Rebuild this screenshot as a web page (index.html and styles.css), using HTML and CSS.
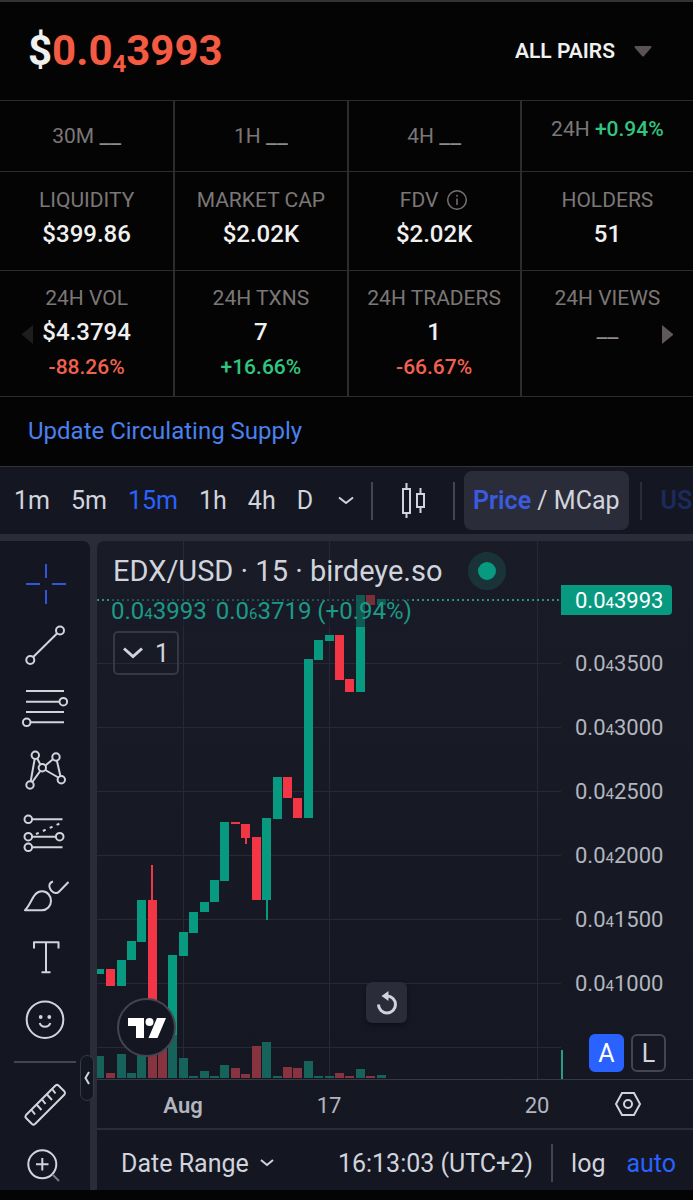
FILE: index.html
```html
<!DOCTYPE html>
<html lang="en">
<head>
  <meta charset="UTF-8">
  <meta name="viewport" content="width=device-width, initial-scale=1.0">
  <title>EDX/USD</title>
  <link rel="stylesheet" href="styles.css">
</head>
<body>
  <header class="header">
    <div class="price">$<span class="price-value">0.0<sub>4</sub>3993</span></div>
    <div class="pairs">
      <select class="pairs-select" aria-label="Pairs">
        <option>ALL PAIRS</option>
      </select>
      <svg class="pairs-caret" width="18" height="11" viewBox="0 0 18 11"><path d="M1 0h16q1 1 0 2l-7 8q-1 1-2 0L1 2q-1-1 0-2z" fill="#5b5353"/></svg>
    </div>
  </header>

  <section class="stats">
    <div class="stats-row changes">
      <div class="stat"><span class="stat-label">30M</span> <span class="stat-empty">__</span></div>
      <div class="stat"><span class="stat-label">1H</span> <span class="stat-empty">__</span></div>
      <div class="stat"><span class="stat-label">4H</span> <span class="stat-empty">__</span></div>
      <div class="stat stat-top"><span class="stat-label">24H</span> <span class="stat-change up">+0.94%</span></div>
    </div>
    <div class="stats-row totals">
      <div class="stat"><div class="stat-label">LIQUIDITY</div><div class="stat-value">$399.86</div></div>
      <div class="stat"><div class="stat-label">MARKET CAP</div><div class="stat-value">$2.02K</div></div>
      <div class="stat">
        <div class="stat-label with-icon">FDV
          <svg width="22" height="22" viewBox="0 0 22 22" fill="none" stroke="#77716f" stroke-width="1.5"><circle cx="11" cy="11" r="9.3"/><path d="M11 9.5v6.5M11 5.8v2"/></svg>
        </div>
        <div class="stat-value">$2.02K</div>
      </div>
      <div class="stat"><div class="stat-label">HOLDERS</div><div class="stat-value">51</div></div>
    </div>
    <div class="stats-row activity">
      <div class="stat"><div class="stat-label">24H VOL</div><div class="stat-value">$4.3794</div><div class="stat-change down">-88.26%</div></div>
      <div class="stat"><div class="stat-label">24H TXNS</div><div class="stat-value">7</div><div class="stat-change up">+16.66%</div></div>
      <div class="stat"><div class="stat-label">24H TRADERS</div><div class="stat-value">1</div><div class="stat-change down">-66.67%</div></div>
      <div class="stat"><div class="stat-label">24H VIEWS</div><div class="stat-empty">__</div></div>
      <button class="scroll prev" aria-label="Previous"><svg width="12" height="19" viewBox="0 0 12 19"><path d="M11 0v19L0 10V9z" fill="#1e1c1c"/></svg></button>
      <button class="scroll next" aria-label="Next"><svg width="12" height="19" viewBox="0 0 12 19"><path d="M1 0v19l11-9V9z" fill="#5e5858"/></svg></button>
    </div>
    <div class="update"><a class="update-link" href="#">Update Circulating Supply</a></div>
  </section>

  <nav class="toolbar">
    <div class="intervals">
      <button>1m</button>
      <button>5m</button>
      <button class="active">15m</button>
      <button>1h</button>
      <button>4h</button>
      <button>D</button>
    </div>
    <button class="more" aria-label="More intervals"><svg width="16" height="9" viewBox="0 0 16 9" fill="none" stroke="#d1d4dc" stroke-width="2"><path d="M1 1.5l7 5.5 7-5.5"/></svg></button>
    <span class="divider"></span>
    <button class="chart-type" aria-label="Candles"><svg width="26" height="36" viewBox="0 0 26 36" fill="none" stroke="#d1d4dc" stroke-width="2"><path d="M2 6h7v24H2zM5.500 0v6M5.500 30v5M16 11h7v13h-7zM19.500 5v6M19.500 24v6"/></svg></button>
    <span class="divider"></span>
    <button class="mcap"><b>Price</b> / MCap</button>
    <span class="divider dim"></span>
    <button class="currency">USD</button>
  </nav>

  <main class="workspace">
    <aside class="tools">
      <button class="tool active" aria-label="Cross"><svg viewBox="0 0 90 62"><path d="M46 11v14M46 37v14M26 31h14M52 31h14"/></svg></button>
      <button class="tool" aria-label="Trend line"><svg viewBox="0 0 90 62"><circle cx="60" cy="15.500" r="4"/><circle cx="30.300" cy="45" r="4"/><path d="M57 18.500L33.200 42"/></svg></button>
      <button class="tool" aria-label="Fib retracement"><svg viewBox="0 0 90 62"><path d="M26 14h38M26 24.700h33M26 35h38M31 45.300h33"/><circle cx="63.300" cy="24.700" r="3.800"/><circle cx="26.700" cy="45.300" r="3.800"/></svg></button>
      <button class="tool" aria-label="Pattern"><svg viewBox="0 0 90 62"><circle cx="35.300" cy="16.300" r="3.700"/><circle cx="56" cy="18" r="3.700"/><circle cx="42.300" cy="28.700" r="3.700"/><circle cx="30" cy="46" r="3.700"/><circle cx="61.300" cy="40.700" r="3.700"/><path d="M30.700 42.300l4-22.300M37.300 19.500l3 6M45.400 26.500l7.500-6.300M56.900 21.700l3.500 15.300M32.300 43l8-11.200M45.300 31l13 7.500"/></svg></button>
      <button class="tool" aria-label="Forecast"><svg viewBox="0 0 90 62"><circle cx="28.300" cy="18.300" r="3.800"/><circle cx="28.300" cy="35.700" r="3.800"/><circle cx="59.700" cy="35.700" r="3.800"/><circle cx="28.300" cy="46.300" r="3.800"/><path d="M32 18.300h30.500M32 35.700h24M32 46.300h30.500"/><path d="M36 33l25-11" stroke-dasharray="3 4.500"/></svg></button>
      <button class="tool" aria-label="Brush"><svg viewBox="0 0 90 62"><path d="M25 47.300C32 40 33 28.300 42 28.300c5.500 0 9 4.700 9 9.700s-4 9.300-9 9.300zM53 18.500c-3 1-4 3-3.500 5.500.8 3 3 5.500 6 6 1.500.2 2.500-.3 3.500-1.300L68.500 19"/></svg></button>
      <button class="tool" aria-label="Text"><svg viewBox="0 0 90 62"><path d="M34 23.500v-6.200h24.500v6.200M46 17.300v30M41.500 47.300h9"/></svg></button>
      <button class="tool" aria-label="Icons"><svg viewBox="0 0 90 62"><circle cx="45" cy="32.700" r="18.300"/><path d="M39.700 36c1.500 5 9.100 5 10.600 0"/><circle class="solid" cx="40.700" cy="30" r="1.900"/><circle class="solid" cx="49.300" cy="30" r="1.900"/></svg></button>
      <span class="tools-divider"></span>
      <button class="tool" aria-label="Measure"><svg viewBox="0 0 90 62"><path d="M55.500 11.500q1.500-1.200 3 0l6 6q1.200 1.500 0 3L35 50q-1.500 1.200-3 0l-6-6q-1.200-1.500 0-3zM32 36.500l3 4M37 31l4.500 5M42.500 26l3 4M47.500 21l4.500 5M52.500 15.500l3 4"/></svg></button>
      <button class="tool" aria-label="Zoom in"><svg viewBox="0 0 90 62"><circle cx="42.300" cy="28.300" r="14"/><path d="M42.300 22v12.500M36 28.300h12.500"/><path d="M52.500 38.500l6.500 6.500" stroke="#787b86"/></svg></button>
      <button class="collapse" aria-label="Hide toolbar"><svg width="6" height="14" viewBox="0 0 6 14" fill="none" stroke="#d1d4dc" stroke-width="2"><path d="M5 1L1.500 7 5 13"/></svg></button>
    </aside>

    <div class="chart">
      <div class="plot">
        <div class="pane">
          <svg class="candles" width="100%" height="538">
            <g class="grid">
              <path d="M86.500 0v538M232.500 0v538M440.500 0v538"/>
              <path d="M0 122.500h2000M0 186.500h2000M0 250.500h2000M0 314.500h2000M0 378.500h2000M0 442.500h2000M0 506.500h2000"/>
            </g>
            <g class="volume up">
              <path d="M0 515h7v22h-7zM20 513h9v24h-9zM30 532h9v5h-9zM40 505h9v32h-9zM71 494h9v43h-9zM82 517h9v20h-9zM92 535h9v2h-9zM103 530h9v7h-9zM113 535h9v2h-9zM123 524h9v13h-9zM165 501h9v36h-9zM176 535h9v2h-9zM207 520h9v17h-9zM217 535h9v2h-9zM228 535h9v2h-9zM259 528h9v9h-9zM280 534h9v3h-9z"/>
            </g>
            <g class="volume down">
              <path d="M9 532h9v5h-9zM51 500h9v37h-9zM61 500h9v37h-9zM134 527h9v10h-9zM144 533h9v4h-9zM155 505h9v32h-9zM186 526h9v11h-9zM196 527h9v10h-9zM238 532h9v5h-9zM248 535h9v2h-9zM269 535h9v2h-9z"/>
            </g>
            <g class="body up">
              <path d="M0 428h7v5h-7zM20 419h9v26h-9zM30 400h9v19h-9zM40 359h9v42h-9zM71 414h9v80h-9zM82 391h9v24h-9zM92 371h9v21h-9zM103 361h9v10h-9zM113 339h9v22h-9zM123 281h9v59h-9zM165 277h9v82h-9zM169 359h2v20h-2zM176 236h9v42h-9zM207 118h9v159h-9zM217 99h9v20h-9zM228 94h9v6h-9zM259 54h9v97h-9zM280 58h9v6h-9z"/>
            </g>
            <g class="body down">
              <path d="M9 428h9v17h-9zM51 359h9v125h-9zM54 324h2v35h-2zM134 281h9v2h-9zM144 283h9v14h-9zM148 297h2v6h-2zM155 296h9v63h-9zM186 236h9v21h-9zM196 257h9v20h-9zM238 94h9v45h-9zM248 138h9v13h-9zM269 54h9v10h-9z"/>
            </g>
            <path class="last-price" d="M0 59h2000"/>
          </svg>

          <div class="legend">
            <div class="legend-title">EDX/USD · 15 · birdeye.so <span class="status"></span></div>
            <div class="legend-values"><span>0.0<sub>4</sub>3993</span> <span>0.0<sub>6</sub>3719 (+0.94%)</span></div>
            <button class="legend-toggle"><svg width="20" height="12" viewBox="0 0 20 12" fill="none" stroke="#d1d4dc" stroke-width="3"><path d="M1 1.500l9 8 9-8"/></svg>1</button>
          </div>

          <a class="tv-logo" href="#" aria-label="TradingView"><svg width="38" height="20" viewBox="0 0 38 20" fill="#fff"><path d="M0 0h16v20H8V8H0zM29 0h9l-8.500 20h-9z"/><circle cx="21.500" cy="4" r="4"/></svg></a>
          <button class="reset" aria-label="Reset chart"><svg width="22" height="24" viewBox="0 0 22 24" fill="none" stroke="#d1d4dc" stroke-width="3"><path d="M2.500 13.500a8.500 8.500 0 1 0 8.500-8.500"/><path d="M12.500 0v10L5.500 5z" fill="#d1d4dc" stroke="none"/></svg></button>
        </div>

        <div class="scale">
          <div class="scale-label">0.0<sub>4</sub>3500</div>
          <div class="scale-label">0.0<sub>4</sub>3000</div>
          <div class="scale-label">0.0<sub>4</sub>2500</div>
          <div class="scale-label">0.0<sub>4</sub>2000</div>
          <div class="scale-label">0.0<sub>4</sub>1500</div>
          <div class="scale-label">0.0<sub>4</sub>1000</div>
          <div class="scale-modes">
            <button class="mode active">A</button>
            <button class="mode">L</button>
          </div>
          <div class="scale-last">0.0<sub>4</sub>3993</div>
          <span class="scale-tick"></span>
        </div>
      </div>

      <div class="time-axis">
        <div class="ticks">
          <span class="tick month">Aug</span>
          <span class="tick day">17</span>
          <span class="tick later">20</span>
        </div>
        <button class="settings" aria-label="Settings"><svg width="28" height="26" viewBox="0 0 28 26" fill="none" stroke="#d1d4dc" stroke-width="2"><path d="M8 2h12l6 11-6 11H8L2 13z"/><circle cx="14" cy="13" r="4"/></svg></button>
      </div>

      <div class="bottom-bar">
        <button class="range">Date Range <svg width="14" height="8" viewBox="0 0 14 8" fill="none" stroke="#d1d4dc" stroke-width="2"><path d="M1 1l6 5 6-5"/></svg></button>
        <div class="bottom-right">
          <button>16:13:03 (UTC+2)</button>
          <span class="divider"></span>
          <button>log</button>
          <button class="active">auto</button>
        </div>
      </div>
    </div>
  </main>
</body>
</html>
```
FILE: styles.css
```css
:root {
  --panel: #141722;
  --line: #2a2d39;
  --text: #d1d4dc;
  --blue: #2962ff;
  --green: #089981;
  --red: #f23645;
  --stat-line: #2e2b2b;
}

* {
  box-sizing: border-box;
}

body {
  margin: 0;
  background: #040404;
  color: #f0f0f0;
  font-family: Roboto, "Liberation Sans", sans-serif;
  overflow-x: hidden;
}

button,
select {
  margin: 0;
  padding: 0;
  border: none;
  background: none;
  color: inherit;
  font: inherit;
  cursor: pointer;
}

svg {
  display: block;
  flex: none;
}

/* header */
.header {
  display: flex;
  justify-content: space-between;
  align-items: center;
  height: 100px;
  padding: 0 41px 0 28px;
  border-top: 2px solid #333;
}

.price {
  font-size: 42px;
  line-height: 48px;
  font-weight: 700;
}

.price-value {
  color: #f55a42;
}

.price sub {
  font-size: 24px;
  line-height: 0;
  vertical-align: -7px;
}

.pairs {
  display: flex;
  align-items: center;
  gap: 19px;
}

.pairs-select {
  appearance: none;
  font-size: 21px;
  line-height: 24px;
  font-weight: 600;
}

/* stats */
.stats {
  border-bottom: 1px solid #333;
}

.stats-row {
  position: relative;
  display: grid;
  grid-template-columns: repeat(4, 1fr);
  border-top: 1px solid var(--stat-line);
}

.stat {
  text-align: center;
  line-height: 34px;
}

.stat + .stat {
  border-left: 2px solid var(--stat-line);
}

.changes .stat {
  padding: 18px 0;
  font-size: 21px;
  height: 70px;
}

.changes .stat-top {
  padding-top: 10px;
}

.totals .stat {
  padding: 11px 0 19px;
}

.activity .stat {
  padding: 10px 0 11px;
}

.stat-label {
  font-size: 21px;
  color: #7b7776;
}

.with-icon {
  display: flex;
  justify-content: center;
  align-items: center;
  gap: 8px;
}

.stat-value {
  font-size: 24px;
  font-weight: 500;
}

.stat-empty {
  font-size: 24px;
  line-height: 28px;
  color: #8f8b8a;
}

.stat-change {
  font-size: 21px;
  line-height: 36px;
  font-weight: 500;
}

.up {
  color: #33c481;
}

.down {
  color: #f0614f;
}

.scroll {
  position: absolute;
  top: 54px;
}

.prev {
  left: 22px;
}

.next {
  right: 20px;
}

.update {
  padding: 17px 28px 18px;
  border-top: 1px solid var(--stat-line);
}

.update-link {
  font-size: 24px;
  line-height: 34px;
  color: #4a80f0;
  text-decoration: none;
}

/* top toolbar */
.toolbar {
  display: flex;
  align-items: center;
  height: 67px;
  padding-left: 14px;
  background: var(--panel);
  color: var(--text);
  font-size: 25px;
  line-height: 30px;
  white-space: nowrap;
  overflow: hidden;
}

.intervals {
  display: flex;
  gap: 21px;
}

.active {
  color: var(--blue);
}

.more {
  margin: 0 17px 0 25px;
}

.divider {
  flex: none;
  width: 2px;
  height: 38px;
  background: #434651;
}

.chart-type {
  margin: 0 26px 0 28px;
}

.mcap {
  height: 59px;
  margin: 0 11px 0 9px;
  padding: 0 9px;
  border-radius: 8px;
  background: var(--line);
}

.mcap b {
  font-weight: 600;
  color: #3a5be0;
}

.dim {
  background: #2a2d39;
}

.currency {
  margin-left: 19px;
  font-weight: 600;
  color: #1c2a5c;
}

/* workspace */
.workspace {
  display: flex;
  gap: 7px;
  height: 656px;
  padding-top: 7px;
  background: var(--line);
}

.tools {
  position: relative;
  flex: none;
  width: 90px;
  padding-top: 12px;
  border-top-right-radius: 7px;
  background: var(--panel);
}

.tool {
  display: block;
  width: 90px;
  height: 62px;
}

.tool svg {
  width: 90px;
  height: 62px;
  fill: none;
  stroke: var(--text);
  stroke-width: 2;
  stroke-linejoin: round;
}

.tool.active svg {
  stroke: #3157d8;
}

.tool .solid {
  fill: var(--text);
  stroke: none;
}

.tools-divider {
  display: block;
  height: 2px;
  margin: 12px 14px 11px;
  background: #434651;
}

.collapse {
  position: absolute;
  top: 514px;
  right: -4px;
  display: flex;
  align-items: center;
  justify-content: center;
  width: 14px;
  height: 46px;
  border: 1px solid #363a45;
  border-radius: 7px;
  background: var(--panel);
}

.chart {
  flex: 1;
  min-width: 0;
  border-top-left-radius: 7px;
  background: linear-gradient(#191b27, var(--panel));
  color: var(--text);
}

.plot {
  display: flex;
  border-bottom: 1px solid #363843;
}

.pane {
  position: relative;
  flex: 1;
  min-width: 0;
}

.grid path {
  fill: none;
  stroke: #272a36;
}

.body.up {
  fill: var(--green);
}

.body.down {
  fill: var(--red);
}

.volume.up {
  fill: #15635b;
}

.volume.down {
  fill: #873440;
}

.last-price {
  stroke: #2b8f80;
  stroke-width: 2;
  stroke-dasharray: 2 3;
}

.legend {
  position: absolute;
  top: 11px;
  left: 14px;
}

.legend-title {
  display: flex;
  align-items: center;
  gap: 26px;
  height: 38px;
  padding-left: 2px;
  font-size: 29px;
  white-space: nowrap;
}

.status {
  width: 38px;
  height: 38px;
  border: 10px solid #1a3338;
  border-radius: 50%;
  background: var(--green);
}

.legend-values {
  display: inline-flex;
  gap: 9px;
  height: 32px;
  margin-top: 5px;
  background: rgba(24, 27, 39, 0.5);
  color: #1c9a86;
  font-size: 24px;
  line-height: 32px;
  white-space: nowrap;
}

.chart sub {
  font-size: 15px;
  line-height: 0;
  vertical-align: baseline;
}

.legend-toggle {
  display: flex;
  align-items: center;
  justify-content: center;
  gap: 12px;
  width: 66px;
  height: 44px;
  margin: 4px 0 0 2px;
  border: 2px solid #363843;
  border-radius: 5px;
  font-size: 25px;
}

.tv-logo {
  position: absolute;
  left: 20px;
  bottom: 22px;
  display: flex;
  align-items: center;
  justify-content: center;
  width: 59px;
  height: 59px;
  border: 2px solid #434651;
  border-radius: 50%;
  background: var(--panel);
}

.reset {
  position: absolute;
  left: 269px;
  bottom: 56px;
  display: flex;
  align-items: center;
  justify-content: center;
  width: 41px;
  height: 41px;
  border-radius: 6px;
  background: var(--line);
  box-shadow: 0 2px 4px rgba(0, 0, 0, 0.4);
}

.scale {
  position: relative;
  flex: none;
  width: 132px;
  padding-top: 91px;
  color: #b2b5be;
  font-size: 22px;
}

.scale-label {
  padding-left: 14px;
  line-height: 64px;
}

.scale-modes {
  display: flex;
  gap: 7px;
  padding: 18px 0 0 28px;
}

.mode {
  width: 35px;
  height: 38px;
  border: 2px solid #434651;
  border-radius: 6px;
  color: var(--text);
  font-size: 25px;
}

.mode.active {
  border-color: var(--blue);
  background: var(--blue);
  color: #fff;
}

.scale-last {
  position: absolute;
  top: 44px;
  left: 0;
  width: 111px;
  height: 30px;
  padding-left: 14px;
  border-radius: 0 4px 4px 0;
  background: var(--green);
  color: #fff;
  line-height: 32px;
}

.scale-tick {
  position: absolute;
  left: 0;
  bottom: 0;
  width: 2px;
  height: 29px;
  background: #2b9a86;
}

.time-axis {
  display: flex;
  align-items: center;
  justify-content: space-between;
  height: 50px;
  padding-right: 51px;
  border-bottom: 2px solid var(--line);
  color: #b2b5be;
}

.ticks {
  display: flex;
  padding-top: 2px;
  font-size: 22px;
}

.tick {
  width: 60px;
  text-align: center;
}

.month {
  margin-left: 56px;
  font-weight: 600;
}

.day {
  margin-left: 86px;
}

.later {
  margin-left: 148px;
}

.bottom-bar {
  display: flex;
  align-items: center;
  justify-content: space-between;
  height: 60px;
  padding: 6px 17px 0 24px;
  font-size: 25px;
  white-space: nowrap;
}

.range {
  display: flex;
  align-items: center;
  gap: 11px;
}

.bottom-right {
  display: flex;
  align-items: center;
}

.bottom-right .divider {
  margin: 0 18px;
}

.bottom-right .active {
  margin-left: 21px;
}
```
